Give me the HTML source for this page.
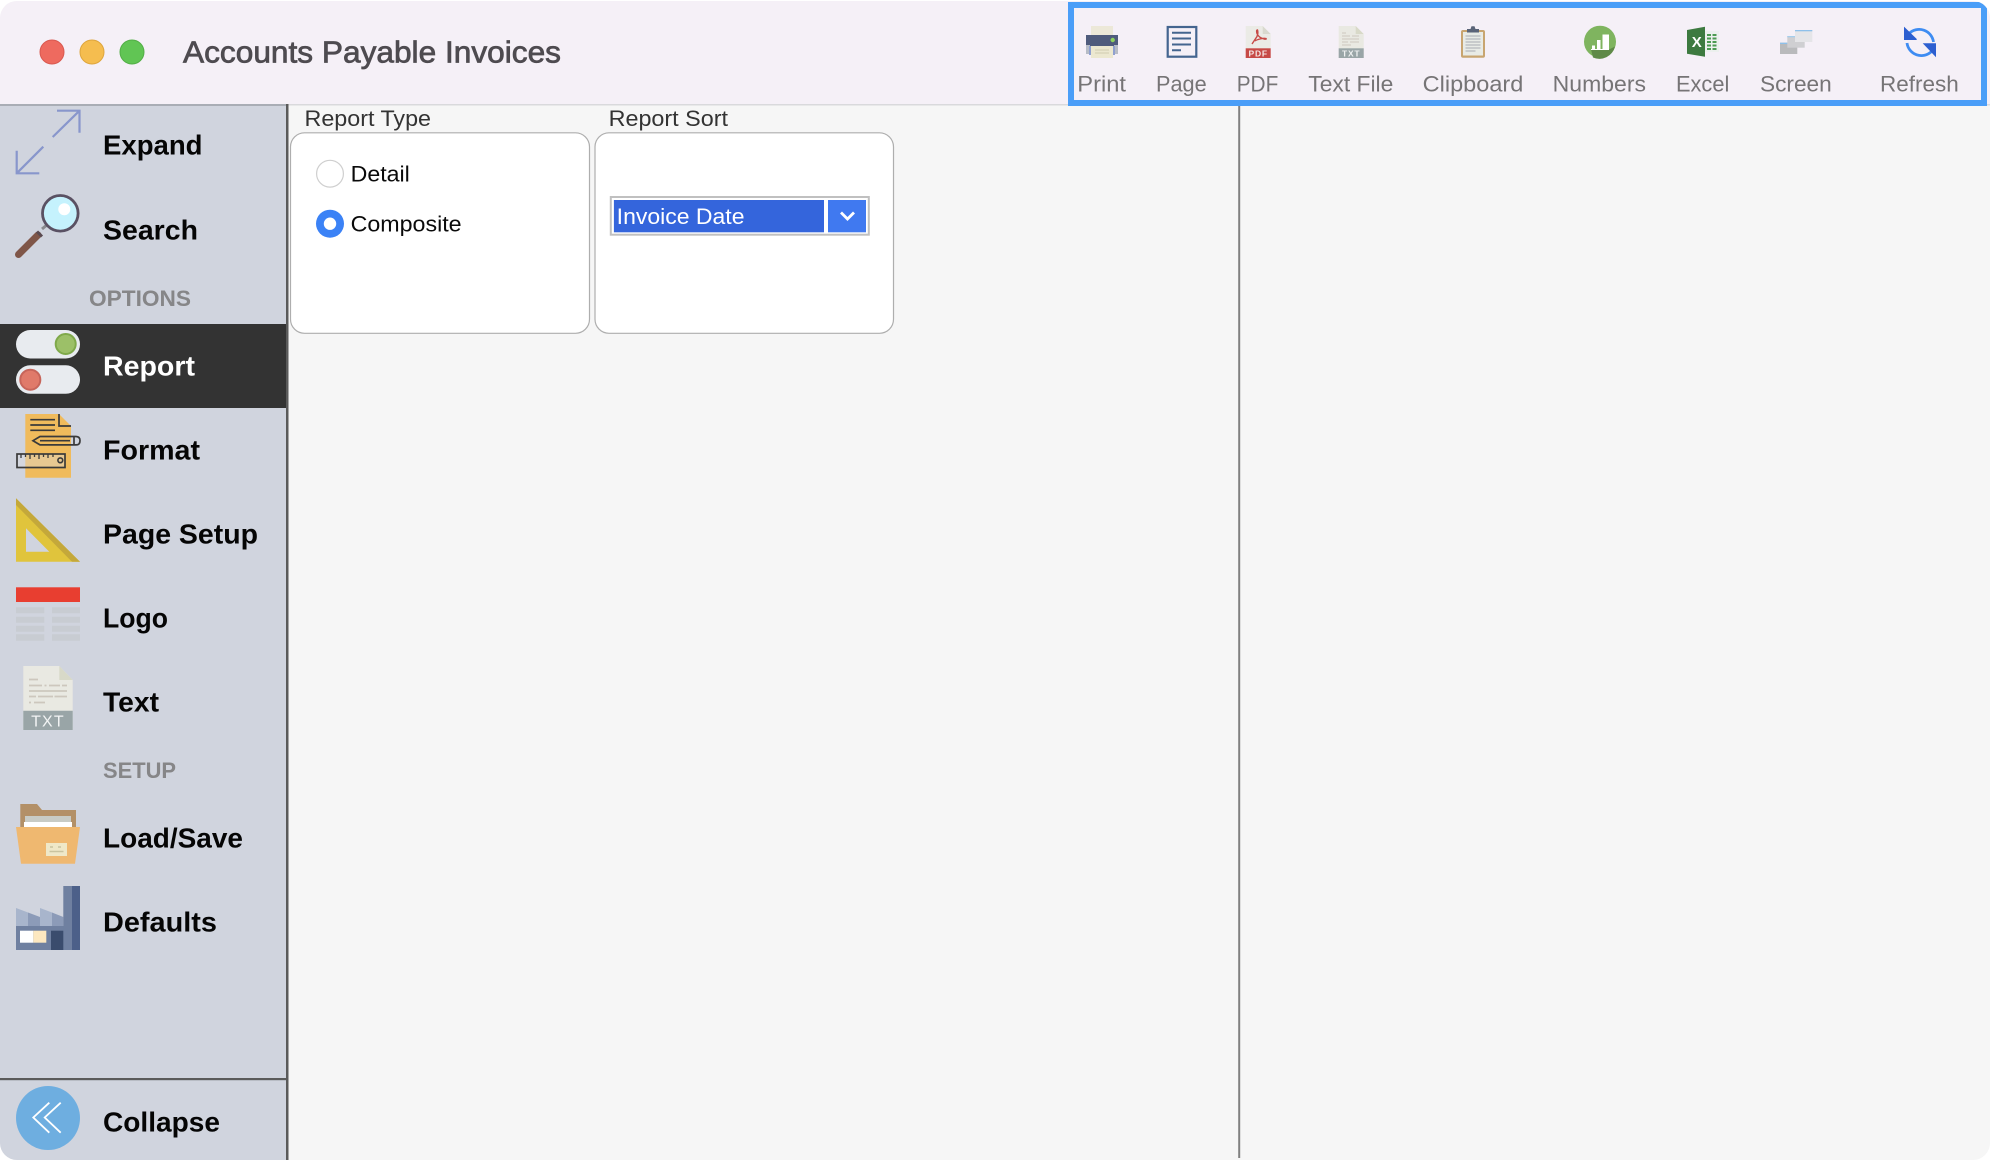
<!DOCTYPE html>
<html lang="en"><head><meta charset="utf-8"><title>Accounts Payable Invoices</title>
<style>
html,body{margin:0;padding:0;background:#fff;width:1990px;height:1160px;overflow:hidden}
svg{display:block;font-family:"Liberation Sans",Arial,sans-serif}
.nav{font-size:28px;font-weight:700;fill:#050505;transform:translateY(-.6px)}
.sec{font-size:22.5px;font-weight:700;fill:#868688}
.tb{font-size:22.5px;fill:#767476}
.lbl{font-size:22.5px;fill:#333}
.opt{font-size:22.5px;fill:#0a0a0a}
</style></head><body>
<svg xmlns="http://www.w3.org/2000/svg" width="1990" height="1160" viewBox="0 0 1990 1160">
<defs><clipPath id="win"><rect x="0" y="1" width="1990" height="1159" rx="17"/></clipPath></defs>
<g clip-path="url(#win)">
<!-- backgrounds -->
<rect width="1990" height="1160" fill="#f6f6f6"/>
<rect width="1990" height="104" fill="#f5f0f7"/>
<rect y="104" width="1990" height="1.5" fill="#d9d9dc"/>
<rect y="105" width="286" height="1055" fill="#d0d4de"/>
<rect y="104" width="286" height="2" fill="#a9adb5"/>
<rect x="286" y="104" width="2.5" height="1056" fill="#5a5a5a"/>
<rect x="1238.2" y="106" width="2" height="1052" fill="#808080"/>

<!-- title bar -->
<circle cx="52" cy="52" r="12" fill="#ee6a5f" stroke="#d9584f"/>
<circle cx="92" cy="52" r="12" fill="#f5bd4f" stroke="#dea53c"/>
<circle cx="132" cy="52" r="12" fill="#61c554" stroke="#52ae46"/>
<text x="183" y="62.500" font-size="31" font-weight="400" fill="#4e4b50" stroke="#4e4b50" stroke-width=".75" textLength="378" lengthAdjust="spacingAndGlyphs">Accounts Payable Invoices</text>

<!-- toolbar outline -->
<rect x="1071" y="5" width="913" height="98" fill="none" stroke="#4a9ef8" stroke-width="6"/>

<!-- print -->
<rect x="1091" y="26" width="22" height="10" fill="#ece8d8"/>
<rect x="1086" y="35" width="32" height="12" fill="#4f5b7c"/>
<rect x="1086" y="45" width="4" height="9" fill="#b7bcc6"/><rect x="1114" y="45" width="4" height="9" fill="#b7bcc6"/>
<rect x="1090" y="45" width="24" height="9" fill="#4f5b7c"/>
<rect x="1089" y="46" width="2" height="9" fill="#8fa0d0"/><rect x="1113" y="46" width="2" height="9" fill="#8fa0d0"/>
<rect x="1091" y="46" width="22" height="12" fill="#ece8d0"/>
<path d="M1095 50h14M1095 53h14" stroke="#cfcbb0" stroke-width="1"/>
<circle cx="1112.7" cy="40" r="2.2" fill="#8ed25e"/>
<text class="tb" x="1077.3" y="91.7" textLength="48.7" lengthAdjust="spacingAndGlyphs">Print</text>

<!-- page -->
<rect x="1167.7" y="27" width="28.6" height="29.7" fill="none" stroke="#44658f" stroke-width="2.2"/>
<path d="M1172 32.8h19M1172 38.5h19M1172 44.5h19M1172 50.3h9" stroke="#44658f" stroke-width="2"/>
<text class="tb" x="1156" y="91.7" textLength="50.7" lengthAdjust="spacingAndGlyphs">Page</text>

<!-- pdf -->
<path d="M1245.7 26h17l8 8v15h-25z" fill="#ebebe6"/><path d="M1262.7 26l8 8h-8z" fill="#d9d9cf"/>
<rect x="1245.7" y="48.3" width="25" height="9.7" fill="#c74a47"/>
<path d="M1252 44l5-7.500q1.500-4 .5-6.500q-1.500 0-.5 3.500q1.500 4 7 5.500q3 .500 2-.5q-2-.5-6 .5q-4 1-5 2" fill="none" stroke="#c74a47" stroke-width="1.400"/>
<text x="1258.2" y="56.300" font-size="8.500" font-weight="700" fill="#f4e6e4" text-anchor="middle" letter-spacing=".8">PDF</text>
<text class="tb" x="1236.7" y="91.7" textLength="41.6" lengthAdjust="spacingAndGlyphs">PDF</text>

<!-- text file -->
<path d="M1338.7 26h17l8 8v24h-25z" fill="#e9e9e2"/><path d="M1355.7 26l8 8h-8z" fill="#d8d9c8"/>
<path d="M1342 33h4M1342 36h8M1352 36h7M1342 39h17M1342 42h6M1350 42h9M1342 45h9" stroke="#cdc7bd" stroke-width="1"/>
<rect x="1338.7" y="48.300" width="25" height="9.700" fill="#99a5a7"/>
<text x="1351.2" y="56.500" font-size="8.500" font-weight="700" fill="#eef0f0" text-anchor="middle" letter-spacing=".8">TXT</text>
<text class="tb" x="1308.3" y="91.7" textLength="85" lengthAdjust="spacingAndGlyphs">Text File</text>

<!-- clipboard -->
<rect x="1461" y="30" width="24" height="27.700" rx="2" fill="#c8a570"/>
<rect x="1463" y="32" width="20" height="23.500" fill="#e8ebe6"/>
<path d="M1467 32v-3h3.500l1-2.700h3l1 2.700h3.500v3.500h-12z" fill="#5a6478"/>
<path d="M1465.500 36h15M1465.500 39h15M1465.500 42h15M1465.500 45h15M1465.500 48h15M1465.500 51h10" stroke="#b5b8bd" stroke-width="1.300"/>
<text class="tb" x="1422.7" y="91.7" textLength="100.6" lengthAdjust="spacingAndGlyphs">Clipboard</text>

<!-- numbers -->
<circle cx="1600" cy="41.700" r="16" fill="#7fb45f"/>
<path d="M1591 49.500h18l6 -3a16 16 0 0 1 -22 11z" fill="#5f8a48"/>
<path d="M1592 45.500h3v4h-3zM1597 40h3.500v9.500h-3.500zM1602.500 34.500h6.500v15h-6.500z" fill="#fff"/>
<path d="M1591 49.500h18" stroke="#fff" stroke-width="1"/>
<text class="tb" x="1552.7" y="91.7" textLength="93.3" lengthAdjust="spacingAndGlyphs">Numbers</text>

<!-- excel -->
<rect x="1705" y="31" width="14" height="21" fill="#ecf0ee"/>
<path d="M1707 35h4M1712.500 35h4M1707 38.500h4M1712.500 38.500h4M1707 42h4M1712.500 42h4M1707 45.500h4M1712.500 45.500h4M1707 49h4M1712.500 49h4" stroke="#4c9a52" stroke-width="2"/>
<path d="M1687 30l18-3.300v30l-18-3z" fill="#3d7a40"/>
<text x="1696.700" y="47" font-size="15" font-weight="700" fill="#fff" text-anchor="middle">X</text>
<text class="tb" x="1676" y="91.7" textLength="53.3" lengthAdjust="spacingAndGlyphs">Excel</text>

<!-- screen -->
<rect x="1780" y="42.700" width="17.300" height="11.300" fill="#b9babc"/><rect x="1780" y="42.700" width="17.300" height="1.300" fill="#8ec0ea"/>
<rect x="1787.300" y="36" width="17.400" height="11.700" fill="#cfcfd2"/><rect x="1787.300" y="36" width="17.400" height="1.300" fill="#a5cdec"/>
<rect x="1795" y="30" width="17.300" height="12" fill="#e5e5e8"/><rect x="1795" y="30" width="17.300" height="1.300" fill="#8ec0ea"/>
<text class="tb" x="1760" y="91.7" textLength="71.700" lengthAdjust="spacingAndGlyphs">Screen</text>

<!-- refresh -->
<path d="M1909 33.500a14.500 14.500 0 0 1 24.500 8.500" fill="none" stroke="#3e8cf2" stroke-width="2.800"/>
<path d="M1907 43a14.500 14.500 0 0 0 24.500 8.500" fill="none" stroke="#3e8cf2" stroke-width="2.800"/>
<path d="M1904 26.700v13.300l13-.7z" fill="#2d5fd0"/><path d="M1904 40h13l-13-13.300z" fill="#2d5fd0"/>
<path d="M1936 57.300v-14h-13.300z" fill="#2d5fd0"/>
<text class="tb" x="1880" y="91.7" textLength="78.700" lengthAdjust="spacingAndGlyphs">Refresh</text>

<!-- sidebar: expand -->
<path d="M57 110.700h22.500v22M79.500 110.700L52.700 137M43.300 146.700L16.700 173.300M16.700 150.700v22.600h22.600" fill="none" stroke="#8896cc" stroke-width="2.200"/>
<text class="nav" x="103" y="155" textLength="99.500" lengthAdjust="spacingAndGlyphs">Expand</text>

<!-- search -->
<path d="M48 224L42 229" stroke="#8a8a8e" stroke-width="3"/>
<path d="M38 235L18.500 254.500" stroke="#7f5648" stroke-width="7" stroke-linecap="round"/>
<path d="M37 231.500L42 236.500" stroke="#5a4a50" stroke-width="3"/>
<circle cx="60.300" cy="213.300" r="17.800" fill="#c5f2fd" stroke="#5a5163" stroke-width="2.800"/>
<circle cx="64.300" cy="209.300" r="6" fill="#fff"/>
<text class="nav" x="103" y="240" textLength="95" lengthAdjust="spacingAndGlyphs">Search</text>

<text class="sec" x="89" y="306" textLength="102" lengthAdjust="spacingAndGlyphs">OPTIONS</text>

<!-- report row -->
<rect y="324" width="286" height="84" fill="#333"/>
<rect x="16" y="330" width="64" height="28.500" rx="14.200" fill="#e8ebef"/>
<circle cx="65.700" cy="344" r="10" fill="#9cc068" stroke="#7fa94a" stroke-width="2"/>
<rect x="16" y="365.300" width="64" height="28.500" rx="14.200" fill="#e8ebef"/>
<circle cx="30.300" cy="379.700" r="10" fill="#e07a6a" stroke="#c7655a" stroke-width="2"/>
<text class="nav" x="103" y="376" textLength="92" lengthAdjust="spacingAndGlyphs" style="fill:#fff">Report</text>

<!-- format -->
<path d="M25.300 414H59l12 12v51.700H25.300z" fill="#f0bb5c"/>
<path d="M30.300 419.700H55M30.300 425H55M30.300 430.300H55M59 414v12h12" fill="none" stroke="#3a3a3a" stroke-width="1.700"/>
<path d="M33 440.700l7-4.200h36q4 0 4 4.200t-4 4.200H40z" fill="none" stroke="#3a3a3a" stroke-width="1.700"/>
<path d="M40 440.700H70M74 436.500v8.400" stroke="#3a3a3a" stroke-width="1.700"/>
<rect x="17" y="454" width="48" height="13.500" fill="#d9dbe0" fill-opacity=".4" stroke="#3a3a3a" stroke-width="1.700"/>
<path d="M21 454v4M25.500 454v3M30 454v5M34.500 454v3M39 454v5M43.500 454v3M48 454v4M53 454v3" stroke="#3a3a3a" stroke-width="1.300"/>
<circle cx="60.300" cy="460.300" r="2.400" fill="none" stroke="#3a3a3a" stroke-width="1.600"/>
<text class="nav" x="103" y="460" textLength="97" lengthAdjust="spacingAndGlyphs">Format</text>

<!-- page setup -->
<path fill-rule="evenodd" d="M16 498.300L80 561.700H16zM26 528.300V551.700H49.300z" fill="#e0c43c"/>
<path d="M16 498.300L80 561.700H72L16 505z" fill="#c4a83a"/>
<text class="nav" x="103" y="544" textLength="155" lengthAdjust="spacingAndGlyphs">Page Setup</text>

<!-- logo -->
<rect x="16" y="587.300" width="64" height="14.700" fill="#e83e30"/>
<path d="M16 607.300h28.300v6H16zM52 607.300h28v6H52zM16 616.700h28.300v6H16zM52 616.700h28v6H52zM16 625.700h28.300v6H16zM52 625.700h28v6H52zM16 634.300h28.300v6.400H16zM52 634.300h28v6.400H52z" fill="#c8ccd2"/>
<text class="nav" x="103" y="628" textLength="65" lengthAdjust="spacingAndGlyphs">Logo</text>

<!-- text -->
<path d="M23.300 666h36l13.400 14v50H23.300z" fill="#e9e9e2"/><path d="M59.300 666l13.400 14H59.300z" fill="#d8d9c8"/>
<path d="M29 679.500h9M29 685.500h13M44.500 685.500h2M49 685.500h11M62 685.500h5M29 691h38M29 696.500h7M38 696.500h15M54.500 696.500h12.500M29 702.500h2M34 702.500h11" stroke="#cdc7bd" stroke-width="1.800"/>
<path d="M23.300 710.700h49.400V730H23.300z" fill="#99a5a7"/>
<text x="48" y="726.700" font-size="16" fill="#f2f4f4" text-anchor="middle" letter-spacing="1.200">TXT</text>
<text class="nav" x="103" y="712" textLength="56" lengthAdjust="spacingAndGlyphs">Text</text>

<text class="sec" x="103" y="778" textLength="73" lengthAdjust="spacingAndGlyphs">SETUP</text>

<!-- load/save -->
<path d="M20.300 804H37l5 6h34v22H20.300z" fill="#b39067"/>
<rect x="25" y="816" width="46" height="8" fill="#c8cbc5"/>
<rect x="24" y="822" width="48" height="6" fill="#fff"/>
<path d="M16 827h64l-5 36.700H21z" fill="#efb870"/>
<rect x="46" y="843" width="21" height="13" fill="#efe8c8"/>
<path d="M50 847h3M58 847h3M49.500 851.500h14" stroke="#c9c4a0" stroke-width="1.500"/>
<text class="nav" x="103" y="848" textLength="140" lengthAdjust="spacingAndGlyphs">Load/Save</text>

<!-- defaults -->
<path d="M16 908l12 4.500v13.500H16z" fill="#a8b5cc"/>
<path d="M28 912.500l12 4.500v9H28z" fill="#8c9bb8"/>
<path d="M40 908l12 4.500v13.500H40z" fill="#a8b5cc"/>
<path d="M52 912.500l11.300 4.500v9H52z" fill="#8c9bb8"/>
<rect x="16" y="926" width="48" height="24" fill="#6f80a0"/>
<rect x="63.300" y="886" width="8.700" height="64" fill="#6f80a0"/>
<rect x="72" y="886" width="8" height="64" fill="#4c6089"/>
<rect x="20" y="930.700" width="13.300" height="12" fill="#fff"/>
<rect x="33.300" y="930.700" width="13" height="12" fill="#fde8c0"/>
<rect x="51" y="930.700" width="12.300" height="19.300" fill="#3a4c6d"/>
<text class="nav" x="103" y="932" textLength="114" lengthAdjust="spacingAndGlyphs">Defaults</text>

<!-- collapse -->
<rect y="1078" width="286" height="2.200" fill="#5a5a5a"/>
<circle cx="48" cy="1118" r="32" fill="#6eaee0"/>
<path d="M49.300 1102.700L33.300 1117.500L49.300 1132.700M60.700 1102.700L44.700 1117.500L60.700 1132.700" fill="none" stroke="#fff" stroke-width="1.800"/>
<text class="nav" x="103" y="1132" textLength="117" lengthAdjust="spacingAndGlyphs">Collapse</text>

<!-- form -->
<text class="lbl" x="304.500" y="126" textLength="126.500" lengthAdjust="spacingAndGlyphs">Report Type</text>
<text class="lbl" x="608.600" y="126" textLength="119.400" lengthAdjust="spacingAndGlyphs">Report Sort</text>
<rect x="290.500" y="132.800" width="299" height="200.500" rx="14" fill="#fff" stroke="#aeaeae" stroke-width="1.200"/>
<rect x="595" y="132.800" width="298.500" height="200.500" rx="14" fill="#fff" stroke="#aeaeae" stroke-width="1.200"/>
<circle cx="330" cy="173.700" r="13.400" fill="#fff" stroke="#cfcfcf" stroke-width="1.200"/>
<text class="opt" x="350.600" y="181.700" textLength="59.200" lengthAdjust="spacingAndGlyphs">Detail</text>
<circle cx="330" cy="223.700" r="14" fill="#3b82f6"/>
<circle cx="330" cy="223.700" r="6.200" fill="#fff"/>
<text class="opt" x="350.600" y="231.700" textLength="111" lengthAdjust="spacingAndGlyphs">Composite</text>
<rect x="610.800" y="197" width="258" height="37.700" fill="#fff" stroke="#c0c0c0" stroke-width="2"/>
<rect x="613.900" y="200" width="210.100" height="32.300" fill="#3465dc"/>
<rect x="828" y="200" width="38" height="32.300" fill="#4079f0"/>
<path d="M841 212.500l6.500 6.500l6.500-6.500" fill="none" stroke="#fff" stroke-width="2.800"/>
<text x="616.700" y="224" font-size="22.500" fill="#fff" textLength="127.800" lengthAdjust="spacingAndGlyphs">Invoice Date</text>
</g>
</svg>
</body></html>
